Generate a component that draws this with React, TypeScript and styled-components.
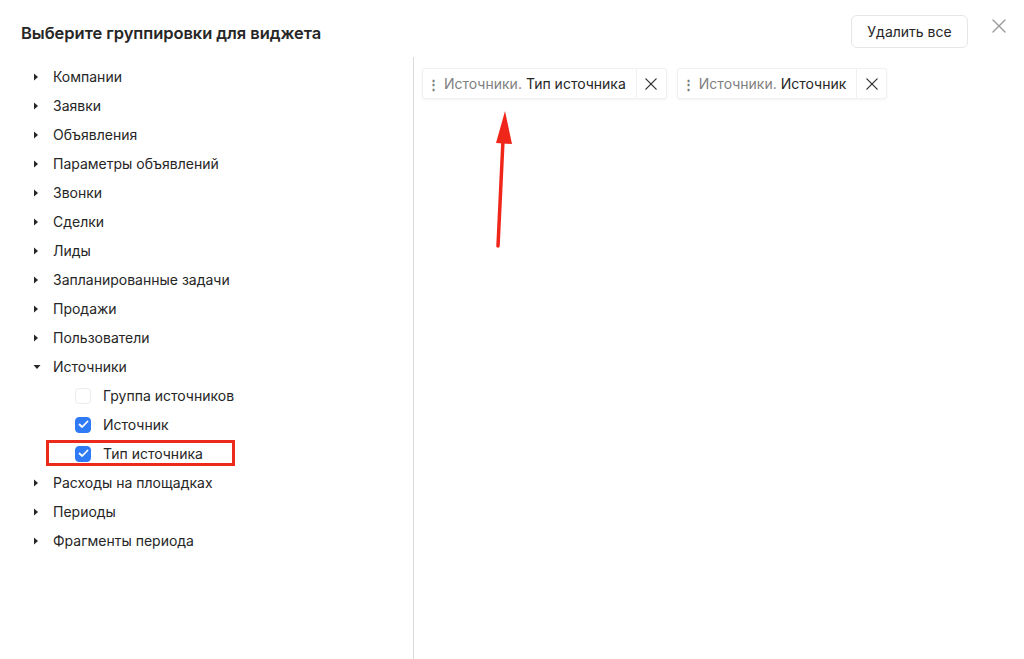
import React from "react";
import styled, { createGlobalStyle } from "styled-components";

const Global = createGlobalStyle`
  html, body { margin: 0; padding: 0; background: #fff; }
  body { font-family: Inter, "Noto Sans", "Liberation Sans", sans-serif; color: #222; }
  * { box-sizing: border-box; }
`;

const Page = styled.div`
  position: relative;
  width: 1024px;
  height: 659px;
  overflow: hidden;
  background: #fff;
`;

const Header = styled.div`
  height: 57px;
  display: flex;
  align-items: center;
  padding: 0 16px 0 21px;
`;

const Title = styled.h1`
  margin: 0;
  flex: 1;
  font-size: 16.5px;
  font-weight: 600;
  color: #262626;
  letter-spacing: -0.05px;
  padding-top: 9px;
`;

const ClearButton = styled.button`
  width: 117px;
  height: 33px;
  border: 1px solid #e6e6e6;
  border-radius: 6px;
  background: #fff;
  font-family: inherit;
  font-size: 14px;
  color: #262626;
  margin-top: 6px;
  margin-right: 22px;
`;

const CloseBtn = styled.div`
  width: 18px;
  height: 18px;
  display: flex;
  align-items: center;
  justify-content: center;
  margin-top: -6px;
`;

const Body = styled.div`
  display: flex;
  height: 602px;
`;

const TreePane = styled.div`
  width: 414px;
  border-right: 1px solid #dadada;
  padding-top: 5px;
`;

const Row = styled.div<{ $level: number }>`
  position: relative;
  height: 29px;
  display: flex;
  align-items: center;
  padding-left: ${(p) => (p.$level === 0 ? 33 : 75)}px;
  font-size: 14px;
  color: #262626;
`;

const Caret = styled.span`
  width: 20px;
  display: flex;
  align-items: center;
`;

const Box = styled.span<{ $checked: boolean }>`
  width: 16px;
  height: 16px;
  border-radius: 4px;
  margin-right: 12px;
  display: flex;
  align-items: center;
  justify-content: center;
  background: ${(p) => (p.$checked ? "#2f7bf5" : "#fff")};
  border: 1px solid ${(p) => (p.$checked ? "#2f7bf5" : "#ececec")};
`;

const Highlight = styled.span`
  position: absolute;
  left: 46px;
  width: 189px;
  top: 1px;
  height: 26px;
  border: 3px solid #ec2a1c;
  pointer-events: none;
`;

const ChipPane = styled.div`
  flex: 1;
  padding: 11px 8px;
  display: flex;
  align-items: flex-start;
  gap: 10px;
`;

const Chip = styled.div`
  height: 31px;
  display: flex;
  align-items: center;
  background: #fff;
  border: 1px solid #f1f1f1;
  border-radius: 3px;
  box-shadow: 0 1px 3px rgba(0, 0, 0, 0.05);
  font-size: 14px;
`;

const Handle = styled.span`
  color: #7a7a7a;
  font-size: 13px;
  width: 21px;
  text-align: center;
  font-weight: 700;
`;

const ChipPrefix = styled.span`
  color: #808080;
`;

const ChipLabel = styled.span`
  color: #262626;
  padding-left: 4px;
  padding-right: 10px;
`;

const ChipClose = styled.span`
  width: 30px;
  height: 29px;
  border-left: 1px solid #f0f0f0;
  display: flex;
  align-items: center;
  justify-content: center;
`;

const Arrow = styled.svg`
  position: absolute;
  left: 480px;
  top: 100px;
  pointer-events: none;
`;

const CaretRight = () => (
  <svg width="6" height="8" viewBox="0 0 6 8"><path d="M1 0.5 L5 4 L1 7.5 Z" fill="#262626" /></svg>
);
const CaretDown = () => (
  <svg width="8" height="6" viewBox="0 0 8 6"><path d="M0.5 1 L7.5 1 L4 5 Z" fill="#262626" /></svg>
);
const Check = () => (
  <svg width="11" height="9" viewBox="0 0 11 9"><path d="M1.5 4.5 L4.2 7 L9.5 1.5" stroke="#fff" strokeWidth="1.8" fill="none" strokeLinecap="round" strokeLinejoin="round" /></svg>
);
const XIcon = ({ size, color, w }: { size: number; color: string; w: number }) => (
  <svg width={size} height={size} viewBox="0 0 14 14"><path d="M1 1 L13 13 M13 1 L1 13" stroke={color} strokeWidth={w} strokeLinecap="round" /></svg>
);

type Node = { label: string; open?: boolean; children?: { label: string; checked: boolean; marked?: boolean }[] };

const tree: Node[] = [
  { label: "Компании" },
  { label: "Заявки" },
  { label: "Объявления" },
  { label: "Параметры объявлений" },
  { label: "Звонки" },
  { label: "Сделки" },
  { label: "Лиды" },
  { label: "Запланированные задачи" },
  { label: "Продажи" },
  { label: "Пользователи" },
  {
    label: "Источники",
    open: true,
    children: [
      { label: "Группа источников", checked: false },
      { label: "Источник", checked: true },
      { label: "Тип источника", checked: true, marked: true },
    ],
  },
  { label: "Расходы на площадках" },
  { label: "Периоды" },
  { label: "Фрагменты периода" },
];

const chips = [
  { prefix: "Источники.", label: "Тип источника" },
  { prefix: "Источники.", label: "Источник" },
];

export default function App() {
  return (
    <Page>
      <Global />
      <Header>
        <Title>Выберите группировки для виджета</Title>
        <ClearButton>Удалить все</ClearButton>
        <CloseBtn>
          <XIcon size={14} color="#9a9a9a" w={1.4} />
        </CloseBtn>
      </Header>
      <Body>
        <TreePane>
          {tree.map((n) => (
            <React.Fragment key={n.label}>
              <Row $level={0}>
                <Caret>{n.open ? <CaretDown /> : <CaretRight />}</Caret>
                {n.label}
              </Row>
              {n.open &&
                n.children?.map((c) => (
                  <Row $level={1} key={c.label}>
                    {c.marked && <Highlight />}
                    <Box $checked={c.checked}>{c.checked && <Check />}</Box>
                    {c.label}
                  </Row>
                ))}
            </React.Fragment>
          ))}
        </TreePane>
        <ChipPane>
          {chips.map((c) => (
            <Chip key={c.label}>
              <Handle>⋮</Handle>
              <ChipPrefix>{c.prefix}</ChipPrefix>
              <ChipLabel>{c.label}</ChipLabel>
              <ChipClose>
                <XIcon size={12} color="#333" w={1.5} />
              </ChipClose>
            </Chip>
          ))}
        </ChipPane>
      </Body>
      <Arrow width="40" height="160" viewBox="0 0 40 160">
        <path d="M18 146 L23 40" stroke="#f0261b" strokeWidth="3.5" strokeLinecap="round" />
        <path d="M25 11 L32 44 L16 43 Z" fill="#f0261b" />
      </Arrow>
    </Page>
  );
}
